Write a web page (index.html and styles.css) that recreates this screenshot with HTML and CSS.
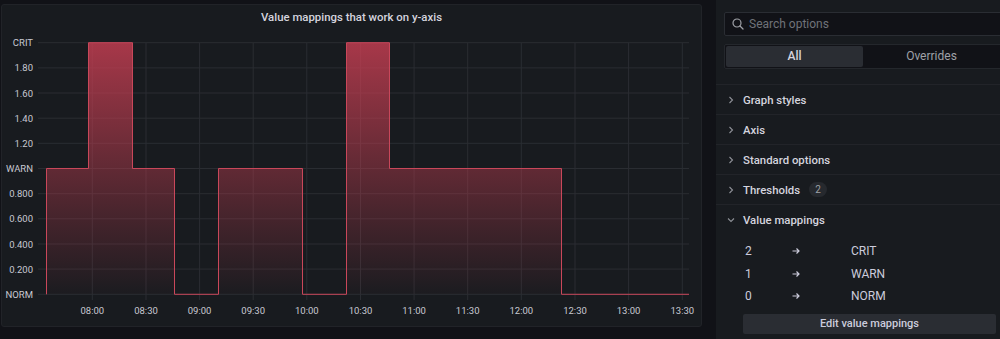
FILE: index.html
```html
<!DOCTYPE html>
<html>
<head>
    <link rel="stylesheet" href="styles.css">
</head>
<body>
    <div class="screen">
        <!-- Panel with the time series -->
        <section class="panel">
            <header class="panel-title">Value mappings that work on y-axis</header>
            <svg class="chart" width="699" height="297" viewBox="0 0 699 297">
                <defs>
                    <linearGradient id="fillGrad" gradientUnits="userSpaceOnUse" x1="0" y1="42.7" x2="0" y2="294.3">
                        <stop offset="0" stop-color="#c63e52" stop-opacity="0.82"/>
                        <stop offset="1" stop-color="#c63e52" stop-opacity="0.02"/>
                    </linearGradient>
                </defs>
                <g transform="translate(-2,-29)">
                    <!-- horizontal grid -->
                    <g class="grid">
                        <line x1="38" x2="689" y1="42.7" y2="42.7"/>
                        <line x1="38" x2="689" y1="67.9" y2="67.9"/>
                        <line x1="38" x2="689" y1="93" y2="93"/>
                        <line x1="38" x2="689" y1="118.2" y2="118.2"/>
                        <line x1="38" x2="689" y1="143.3" y2="143.3"/>
                        <line x1="38" x2="689" y1="168.5" y2="168.5"/>
                        <line x1="38" x2="689" y1="193.7" y2="193.7"/>
                        <line x1="38" x2="689" y1="218.8" y2="218.8"/>
                        <line x1="38" x2="689" y1="244" y2="244"/>
                        <line x1="38" x2="689" y1="269.1" y2="269.1"/>
                        <line x1="38" x2="689" y1="294.3" y2="294.3"/>
                        <!-- vertical grid -->
                        <line x1="92.3" x2="92.3" y1="42.7" y2="300"/>
                        <line x1="146" x2="146" y1="42.7" y2="300"/>
                        <line x1="199.6" x2="199.6" y1="42.7" y2="300"/>
                        <line x1="253.2" x2="253.2" y1="42.7" y2="300"/>
                        <line x1="306.8" x2="306.8" y1="42.7" y2="300"/>
                        <line x1="360.5" x2="360.5" y1="42.7" y2="300"/>
                        <line x1="414.1" x2="414.1" y1="42.7" y2="300"/>
                        <line x1="467.7" x2="467.7" y1="42.7" y2="300"/>
                        <line x1="521.3" x2="521.3" y1="42.7" y2="300"/>
                        <line x1="575" x2="575" y1="42.7" y2="300"/>
                        <line x1="628.6" x2="628.6" y1="42.7" y2="300"/>
                        <line x1="682.3" x2="682.3" y1="42.7" y2="300"/>
                    </g>

                    <!-- series -->
                    <path class="area" d="M46.5,294.3 V168.5 H88.5 V42.7 H132.5 V168.5 H174.5 V294.3 H218.5 V168.5 H302.5 V294.3 H346.5 V42.7 H389.5 V168.5 H561.5 V294.3 H689 Z"/>
                    <path class="line" d="M46.5,294.3 V168.5 H88.5 V42.7 H132.5 V168.5 H174.5 V294.3 H218.5 V168.5 H302.5 V294.3 H346.5 V42.7 H389.5 V168.5 H561.5 V294.3 H689"/>

                    <!-- y axis -->
                    <g class="axis y-axis">
                        <text x="33" y="46.2">CRIT</text>
                        <text x="33" y="71.4">1.80</text>
                        <text x="33" y="96.5">1.60</text>
                        <text x="33" y="121.7">1.40</text>
                        <text x="33" y="146.8">1.20</text>
                        <text x="33" y="172">WARN</text>
                        <text x="33" y="197.2">0.800</text>
                        <text x="33" y="222.3">0.600</text>
                        <text x="33" y="247.5">0.400</text>
                        <text x="33" y="272.6">0.200</text>
                        <text x="33" y="297.8">NORM</text>
                    </g>

                    <!-- x axis -->
                    <g class="axis x-axis">
                        <text x="92.3" y="313.5">08:00</text>
                        <text x="146" y="313.5">08:30</text>
                        <text x="199.6" y="313.5">09:00</text>
                        <text x="253.2" y="313.5">09:30</text>
                        <text x="306.8" y="313.5">10:00</text>
                        <text x="360.5" y="313.5">10:30</text>
                        <text x="414.1" y="313.5">11:00</text>
                        <text x="467.7" y="313.5">11:30</text>
                        <text x="521.3" y="313.5">12:00</text>
                        <text x="575" y="313.5">12:30</text>
                        <text x="628.6" y="313.5">13:00</text>
                        <text x="682.3" y="313.5">13:30</text>
                    </g>
                </g>
            </svg>
        </section>

        <!-- Options pane -->
        <aside class="options">
            <div class="options-head">
                <div class="search">
                    <svg class="search-icon" width="12" height="12" viewBox="0 0 12 12">
                        <circle cx="5" cy="5" r="4" fill="none" stroke="#9fa1a7" stroke-width="1.2"/>
                        <path d="M8 8 L11 11" stroke="#9fa1a7" stroke-width="1.3" stroke-linecap="round"/>
                    </svg>
                    <span class="placeholder">Search options</span>
                </div>
                <div class="tabs">
                    <span class="tab active">All</span>
                    <span class="tab">Overrides</span>
                </div>
            </div>

            <div class="category">
                <svg class="chevron" width="6" height="8" viewBox="0 0 6 8"><path d="M1.5 1 L4.5 4 L1.5 7"/></svg>
                Graph styles
            </div>
            <div class="category">
                <svg class="chevron" width="6" height="8" viewBox="0 0 6 8"><path d="M1.5 1 L4.5 4 L1.5 7"/></svg>
                Axis
            </div>
            <div class="category">
                <svg class="chevron" width="6" height="8" viewBox="0 0 6 8"><path d="M1.5 1 L4.5 4 L1.5 7"/></svg>
                Standard options
            </div>
            <div class="category">
                <svg class="chevron" width="6" height="8" viewBox="0 0 6 8"><path d="M1.5 1 L4.5 4 L1.5 7"/></svg>
                Thresholds <span class="badge">2</span>
            </div>
            <div class="category open">
                <svg class="chevron" width="8" height="6" viewBox="0 0 8 6"><path d="M1 1.5 L4 4.5 L7 1.5"/></svg>
                Value mappings
            </div>

            <div class="mappings">
                <div class="mapping">
                    <span class="map-value">2</span>
                    <svg class="arrow" width="8" height="8" viewBox="0 0 8 8"><path d="M0.5 4 H7 M4.5 1.5 L7 4 L4.5 6.5"/></svg>
                    <span class="map-text">CRIT</span>
                </div>
                <div class="mapping">
                    <span class="map-value">1</span>
                    <svg class="arrow" width="8" height="8" viewBox="0 0 8 8"><path d="M0.5 4 H7 M4.5 1.5 L7 4 L4.5 6.5"/></svg>
                    <span class="map-text">WARN</span>
                </div>
                <div class="mapping">
                    <span class="map-value">0</span>
                    <svg class="arrow" width="8" height="8" viewBox="0 0 8 8"><path d="M0.5 4 H7 M4.5 1.5 L7 4 L4.5 6.5"/></svg>
                    <span class="map-text">NORM</span>
                </div>
                <button type="button" class="edit-button">Edit value mappings</button>
            </div>
        </aside>
    </div>
</body>
</html>
```

FILE: styles.css
```css
body {
    margin: 0;
    background: #111217;
    font-family: Roboto, "Liberation Sans", sans-serif;
    color: #ccccdc;
    overflow: hidden;
}

.screen {
    display: flex;
    height: 339px;
    width: 1000px;
    overflow: hidden;
}

/* Panel */

.panel {
    flex: none;
    margin: 4px 0 0 1px;
    width: 699px;
    height: 321px;
    border: 1px solid #212328;
    border-radius: 3px;
    background: #181b1f;
    display: flex;
    flex-direction: column;
}

.panel-title {
    height: 24px;
    line-height: 24px;
    text-align: center;
    font-size: 11.4px;
    font-weight: 500;
    color: #d4d4de;
}

.chart {
    display: block;
}

.grid line {
    stroke: #2a2d32;
    stroke-width: 1;
}

.area {
    fill: url(#fillGrad);
    stroke: none;
}

.line {
    fill: none;
    stroke: #c9475a;
    stroke-width: 1;
}

.axis text {
    font-family: Roboto, "Liberation Sans", sans-serif;
    font-size: 9.5px;
    fill: #c8c9d2;
}

.y-axis text {
    text-anchor: end;
}

.x-axis text {
    text-anchor: middle;
}

/* Options pane */

.options {
    flex: none;
    margin-left: 14px;
    width: 300px;
    background: #181b1f;
}

.options-head {
    padding: 12px 0 15px 8px;
    border-bottom: 1px solid #222429;
}

.search {
    display: flex;
    align-items: center;
    gap: 5px;
    height: 22px;
    width: 300px;
    padding-left: 7px;
    border: 1px solid #2a2d33;
    border-radius: 2px;
    background: #111217;
}

.search-icon {
    display: block;
}

.placeholder {
    font-size: 12px;
    color: #6f7279;
}

.tabs {
    display: flex;
    margin-top: 8px;
    width: 300px;
    height: 21px;
    padding: 1px;
    border: 1px solid #24272c;
    border-radius: 2px;
    background: #111217;
}

.tab {
    width: 137px;
    line-height: 21px;
    text-align: center;
    font-size: 12px;
    color: #9fa1a7;
}

.tab.active {
    background: #2a2d33;
    border-radius: 2px;
    color: #d4d4de;
    font-weight: 500;
}

.category {
    display: flex;
    align-items: center;
    height: 29px;
    padding-left: 12px;
    border-bottom: 1px solid #222429;
    font-size: 11.4px;
    font-weight: 500;
    color: #d4d4de;
}

.category.open {
    border-bottom: none;
}

.chevron {
    display: block;
    margin-right: 9px;
}

.category.open .chevron {
    margin-left: -1px;
    margin-right: 8px;
}

.chevron path {
    fill: none;
    stroke: #8e9097;
    stroke-width: 1.1;
}

.badge {
    margin-left: 9px;
    width: 18px;
    height: 15px;
    line-height: 15px;
    border-radius: 8px;
    background: #26292e;
    text-align: center;
    font-size: 10px;
    font-weight: 400;
    color: #9fa1a7;
}

.mappings {
    padding: 6px 0 0 27px;
}

.mapping {
    display: flex;
    align-items: center;
    height: 22.5px;
    font-size: 12px;
    color: #ccccdc;
}

.map-value {
    width: 47px;
    padding-left: 2px;
}

.arrow {
    display: block;
    margin-right: 51px;
}

.arrow path {
    fill: none;
    stroke: #ccccdc;
    stroke-width: 1.2;
}

.edit-button {
    display: block;
    margin-top: 6px;
    width: 253px;
    height: 20px;
    border: none;
    border-radius: 2px;
    background: #2a2d33;
    font-family: Roboto, "Liberation Sans", sans-serif;
    font-size: 11px;
    font-weight: 500;
    color: #ccccdc;
    cursor: pointer;
}
```
